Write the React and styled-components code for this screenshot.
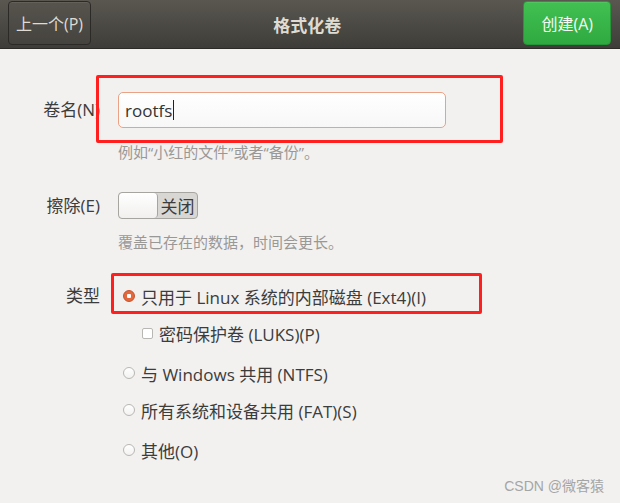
import React from 'react';
import styled, { createGlobalStyle } from 'styled-components';

const GlobalStyle = createGlobalStyle`
  html, body {
    margin: 0;
    background: #f2f1f0;
    font-family: "Open Sans", "Noto Sans CJK SC", sans-serif;
    color: #3c3c3c;
  }
`;

const Page = styled.div`
  position: relative;
  width: 620px;
  height: 503px;
  overflow: hidden;
  background: #f2f1f0;
`;

const HeaderBar = styled.header`
  height: 48px;
  display: grid;
  grid-template-columns: auto 1fr auto;
  align-items: center;
  padding: 0 9px 0 8px;
  background: linear-gradient(#5a5751, #3e3d39);
  border-bottom: 1px solid #2c2b28;
`;

const HeadButton = styled.button`
  height: 44px;
  margin-top: -2px;
  padding: 0 ${(p) => (p.$primary ? 17 : 7)}px;
  border-radius: 4px;
  font-family: inherit;
  font-size: 16px;
  color: ${(p) => (p.$primary ? '#f4fbf4' : '#dfdbd2')};
  border: 1px solid ${(p) => (p.$primary ? '#279638' : '#2b2a27')};
  background: ${(p) =>
    p.$primary
      ? 'linear-gradient(#42c152, #2fa940)'
      : 'linear-gradient(#57544e, #45433e)'};
  box-shadow: inset 0 1px 0 rgba(255, 255, 255, 0.08);
`;

const Title = styled.h1`
  margin: 0;
  text-align: center;
  font-size: 17px;
  font-weight: bold;
  color: #dfdbd2;
`;

const Form = styled.div`
  display: flex;
  flex-direction: column;
`;

const Row = styled.div`
  display: grid;
  grid-template-columns: 100px 1fr;
  column-gap: 18px;
  align-items: ${(p) => (p.$top ? 'start' : 'center')};
  margin-top: ${(p) => p.$mt}px;
`;

const Label = styled.label`
  text-align: right;
  font-size: 17px;
  line-height: 24px;
  color: #3c3c3c;
  white-space: nowrap;
`;

const Cell = styled.div`
  position: relative;
`;

const Annotation = styled.div`
  position: absolute;
  left: ${(p) => p.$l}px;
  top: ${(p) => p.$t}px;
  width: ${(p) => p.$w}px;
  height: ${(p) => p.$h}px;
  border: 3px solid #ff1f1f;
  border-radius: 2px;
  box-sizing: border-box;
  pointer-events: none;
`;

const TextInput = styled.div`
  width: 328px;
  height: 36px;
  box-sizing: border-box;
  display: flex;
  align-items: center;
  padding-left: 6px;
  border: 1px solid #eaa286;
  border-radius: 5px;
  background: linear-gradient(#ffffff, #f7f7f7);
  font-size: 17px;
  color: #333;
`;

const Caret = styled.span`
  display: inline-block;
  width: 1px;
  height: 20px;
  margin-left: 1px;
  background: #222;
`;

const Hint = styled.div`
  margin-left: 118px;
  margin-top: ${(p) => p.$mt}px;
  font-size: 15px;
  line-height: 20px;
  color: #9a9896;
`;

const Switch = styled.div`
  display: flex;
  width: 80px;
  height: 27px;
  box-sizing: border-box;
  border: 1px solid #a7a5a0;
  border-radius: 4px;
  background: #d9d7d3;
  overflow: hidden;
`;

const Knob = styled.span`
  width: 38px;
  border-right: 1px solid #a7a5a0;
  border-radius: 4px;
  background: linear-gradient(#ffffff, #f1f0ee);
`;

const SwitchText = styled.span`
  flex: 1;
  display: flex;
  align-items: center;
  justify-content: center;
  font-size: 17px;
  color: #3c3c3c;
`;

const Options = styled.div`
  display: flex;
  flex-direction: column;
`;

const Option = styled.div`
  position: relative;
  display: flex;
  align-items: center;
  gap: 6px;
  height: 24px;
  margin-top: ${(p) => p.$mt || 0}px;
  padding-left: ${(p) => (p.$indent ? 24 : 5)}px;
  font-size: 17px;
  color: #3c3c3c;
  white-space: nowrap;
`;

const Radio = styled.span`
  width: 12px;
  height: 12px;
  box-sizing: border-box;
  border-radius: 50%;
  flex: none;
  border: 1px solid ${(p) => (p.$on ? '#c2522c' : '#b9b7b3')};
  background: ${(p) =>
    p.$on
      ? 'radial-gradient(circle, #fff 0 2px, #e3693d 2.5px)'
      : 'linear-gradient(#ffffff, #f3f2f1)'};
`;

const Check = styled.span`
  width: 11px;
  height: 11px;
  box-sizing: border-box;
  flex: none;
  border: 1px solid #b9b7b3;
  border-radius: 2px;
  background: #fff;
`;

const Watermark = styled.div`
  position: absolute;
  right: 16px;
  bottom: 8px;
  font-family: "Liberation Sans", "Noto Sans CJK SC", sans-serif;
  font-size: 14px;
  color: #a5a5a5;
`;

export default function App() {
  return (
    <Page>
      <GlobalStyle />
      <HeaderBar>
        <HeadButton>上一个(P)</HeadButton>
        <Title>格式化卷</Title>
        <HeadButton $primary>创建(A)</HeadButton>
      </HeaderBar>
      <Form>
        <Row $mt={43}>
          <Label>卷名(N)</Label>
          <Cell>
            <TextInput>
              rootfs
              <Caret />
            </TextInput>
            <Annotation $l={-22} $t={-17} $w={407} $h={68} />
          </Cell>
        </Row>
        <Hint $mt={14}>例如“小红的文件”或者“备份”。</Hint>
        <Row $mt={30}>
          <Label>擦除(E)</Label>
          <Switch>
            <Knob />
            <SwitchText>关闭</SwitchText>
          </Switch>
        </Row>
        <Hint $mt={13}>覆盖已存在的数据，时间会更长。</Hint>
        <Row $mt={32} $top>
          <Label>类型</Label>
          <Options>
            <Option>
              <Radio $on />
              只用于 Linux 系统的内部磁盘 (Ext4)(I)
              <Annotation $l={-7} $t={-11} $w={371} $h={41} />
            </Option>
            <Option $indent $mt={13}>
              <Check />
              密码保护卷 (LUKS)(P)
            </Option>
            <Option $mt={16}>
              <Radio />
              与 Windows 共用 (NTFS)
            </Option>
            <Option $mt={13}>
              <Radio />
              所有系统和设备共用 (FAT)(S)
            </Option>
            <Option $mt={16}>
              <Radio />
              其他(O)
            </Option>
          </Options>
        </Row>
      </Form>
      <Watermark>CSDN @微客猿</Watermark>
    </Page>
  );
}
